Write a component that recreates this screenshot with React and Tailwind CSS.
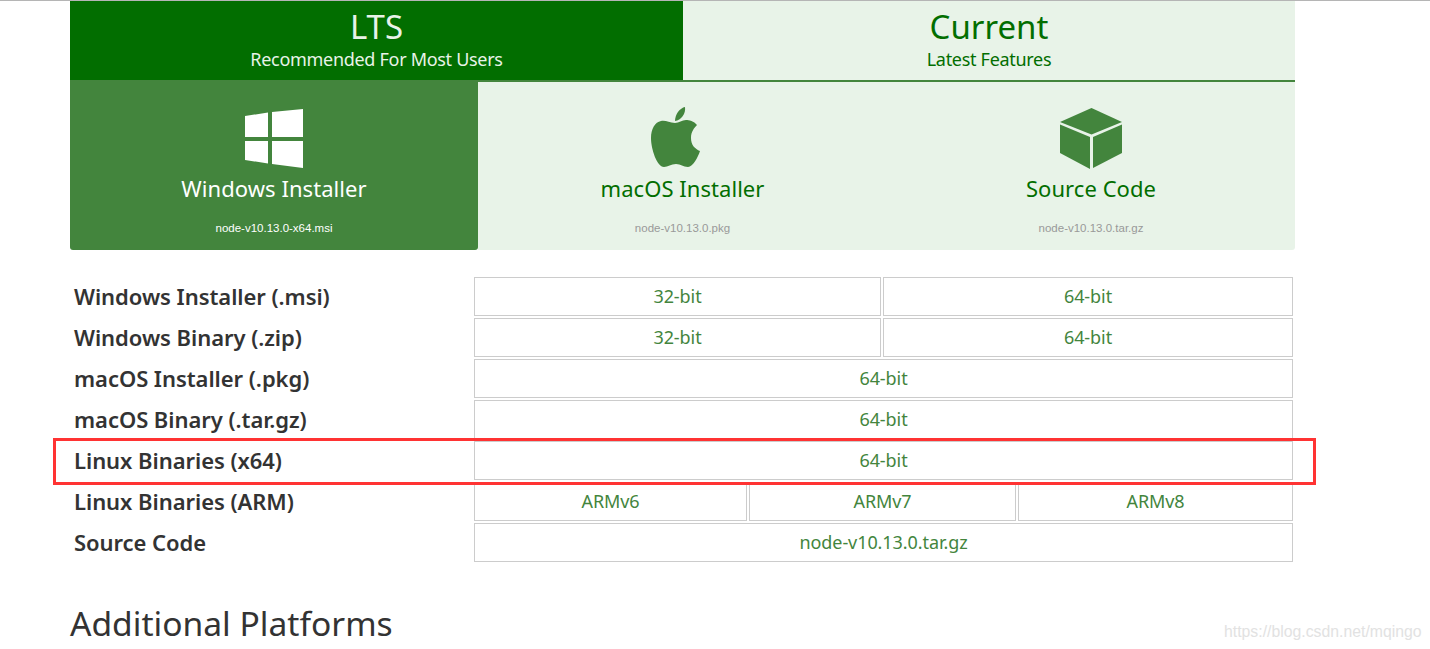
import React from 'react';

const font = 'font-["Noto_Sans",sans-serif]';

const rows = [
    { label: 'Windows Installer (.msi)', links: ['32-bit', '64-bit'], cols: 'grid-cols-[407px_410px]' },
    { label: 'Windows Binary (.zip)', links: ['32-bit', '64-bit'], cols: 'grid-cols-[407px_410px]' },
    { label: 'macOS Installer (.pkg)', links: ['64-bit'], cols: 'grid-cols-1' },
    { label: 'macOS Binary (.tar.gz)', links: ['64-bit'], cols: 'grid-cols-1' },
    { label: 'Linux Binaries (x64)', links: ['64-bit'], cols: 'grid-cols-1' },
    { label: 'Linux Binaries (ARM)', links: ['ARMv6', 'ARMv7', 'ARMv8'], cols: 'grid-cols-[273px_267px_275px]' },
    { label: 'Source Code', links: ['node-v10.13.0.tar.gz'], cols: 'grid-cols-1' },
];

const WindowsIcon = () => (
    <svg className="mt-[2px]" width="60" height="60" viewBox="0 0 60 60" fill="#fff">
        <polygon points="1,7 24,3.5 24,28 1,28" />
        <polygon points="28,3 59,0 59,28 28,28" />
        <polygon points="1,32 24,32 24,54.5 1,51" />
        <polygon points="28,32 59,32 59,59 28,55" />
    </svg>
);

const AppleIcon = () => (
    <svg className="-translate-x-[7px]" width="49" height="60" viewBox="0 0 49 60" fill="#43853d">
        <path d="M24 16C18 16 15 13 10 14C4 15 0 22 0 31C0 42 6 60 13 60C17 60 20 57 25 57C30 57 32 60 37 60C42 60 47 50 49 44C44 42 40 38 40 31C40 25 43 21 46 18C43 14 38 13 35 13C31 13 28 16 24 16Z" />
        <path d="M24 14C24 7 29 1 34 0C35 7 30 13 24 14Z" />
    </svg>
);

const CubeIcon = () => (
    <svg className="mt-[1px]" width="62" height="61" viewBox="0 0 62 61" fill="#43853d">
        <polygon points="31.5,0 62,14 31.5,26.5 0,14" />
        <polygon points="0,16.5 30,29 30,61 0,45" />
        <polygon points="33,29 62,16.5 62,45 33,60" />
    </svg>
);

const DownloadCard = ({ icon, title, file, active, extra }) => (
    <div className={`flex flex-col items-center ${extra} ${active ? 'bg-[#43853d] text-white' : 'bg-[#e8f3e8] text-[#026e00]'}`}>
        <div className={`h-[62px] flex items-start justify-center ${active ? 'mt-[27px]' : 'mt-[25px]'}`}>{icon}</div>
        <div className="text-[22px] leading-[30px] mt-[4px] tracking-[0.05px]">{title}</div>
        <div className={`text-[11.5px] leading-[14px] mt-[18px] font-["Liberation_Sans",sans-serif] ${active ? 'text-white' : 'text-[#999]'}`}>{file}</div>
    </div>
);

const App = () => {
    return (
        <div className={`relative w-[1430px] h-[649px] bg-white overflow-hidden border-t border-[#b5b5b5] ${font}`}>
            <div className="ml-[70px] w-[1225px]">
                <div className="grid grid-cols-[613px_612px] h-[79px] text-center">
                    <div className="bg-[#026e00] text-[#e8f3e8] pt-[4px]">
                        <div className="text-[33px] leading-[44px]">LTS</div>
                        <div className="text-[18px] leading-[20px] tracking-[-0.3px]">Recommended For Most Users</div>
                    </div>
                    <div className="bg-[#e8f3e8] text-[#026e00] pt-[4px]">
                        <div className="text-[33px] leading-[44px]">Current</div>
                        <div className="text-[18px] leading-[20px] tracking-[-0.3px]">Latest Features</div>
                    </div>
                </div>
                <div className="grid grid-cols-[408px_409px_408px] h-[170px]">
                    <DownloadCard active icon={<WindowsIcon />} title="Windows Installer" file="node-v10.13.0-x64.msi" extra="rounded-b-[3px]" />
                    <DownloadCard icon={<AppleIcon />} title="macOS Installer" file="node-v10.13.0.pkg" extra="border-t-2 border-[#43853d]" />
                    <DownloadCard icon={<CubeIcon />} title="Source Code" file="node-v10.13.0.tar.gz" extra="border-t-2 border-[#43853d] rounded-br-[3px]" />
                </div>
            </div>

            <div className="ml-[70px] mt-[27px] flex flex-col gap-[2px]">
                {rows.map((row) => (
                    <div key={row.label} className="flex h-[39px]">
                        <div className="w-[404px] pl-[4px] text-[22px] leading-[39px] font-semibold text-[#333] tracking-[-0.05px]">{row.label}</div>
                        <div className={`w-[819px] grid gap-[2px] ${row.cols}`}>
                            {row.links.map((link, idx) => (
                                <div key={idx} className="border border-[#ccc] text-center text-[18px] leading-[36px] text-[#43853d] tracking-[-0.08px]">{link}</div>
                            ))}
                        </div>
                    </div>
                ))}
            </div>

            <h2 className="ml-[70px] mt-[39px] text-[33.6px] leading-[44px] text-[#333]">Additional Platforms</h2>

            {/* annotation drawn over the screenshot */}
            <div className="absolute left-[53px] top-[437px] w-[1263px] h-[47px] border-[3px] border-[#ff3333]" />
            <div className="absolute left-[1224px] top-[620px] text-[15.8px] leading-[22px] text-[#e2e2e2] font-['Liberation_Sans',sans-serif]">https://blog.csdn.net/mqingo</div>
        </div>
    );
};

export default App;
